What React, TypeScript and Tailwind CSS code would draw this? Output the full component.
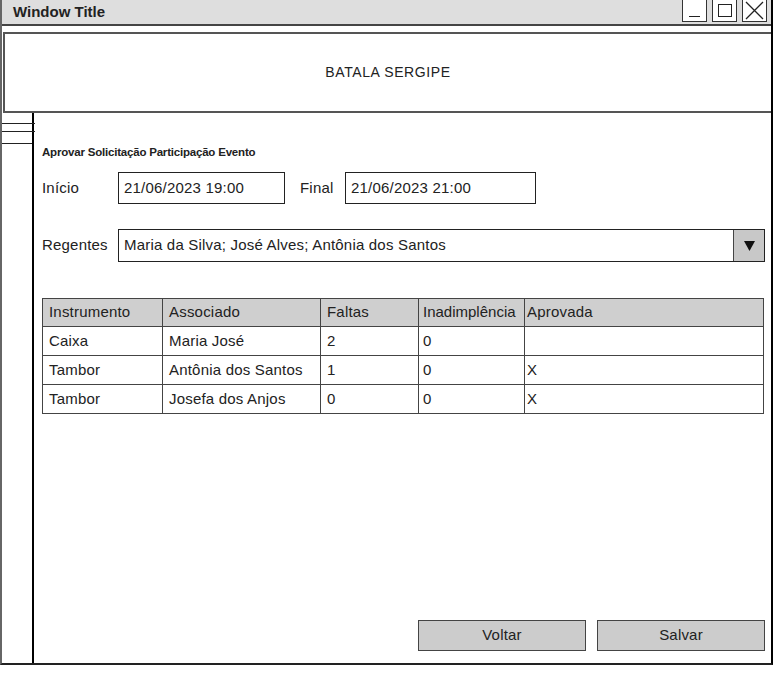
import React from "react";

const font = { fontFamily: '"Liberation Sans", "Noto Sans", sans-serif' };

type Row = {
  instrumento: string;
  associado: string;
  faltas: string;
  inadimplencia: string;
  aprovada: string;
};

const rows: Row[] = [
  { instrumento: "Caixa", associado: "Maria José", faltas: "2", inadimplencia: "0", aprovada: "" },
  { instrumento: "Tambor", associado: "Antônia dos Santos", faltas: "1", inadimplencia: "0", aprovada: "X" },
  { instrumento: "Tambor", associado: "Josefa dos Anjos", faltas: "0", inadimplencia: "0", aprovada: "X" },
];

/**
 * Window control boxes in the title bar (minimise, maximise, close)
 */
const WindowButtons: React.FC = () => (
  <div className="flex items-start gap-[5px] self-start pr-[4px]">
    <div className="w-[25px] h-[22px] bg-white border border-[#333] border-t-0 flex items-end justify-center pb-[4px]">
      <div className="w-[11px] h-[1.5px] bg-[#222]" />
    </div>
    <div className="w-[25px] h-[22px] bg-white border border-[#333] border-t-0 flex items-center justify-center">
      <div className="w-[14px] h-[13px] border-[1.5px] border-[#222]" />
    </div>
    <div className="w-[25px] h-[22px] bg-white border border-[#333] border-t-0 flex items-center justify-center">
      <svg width="19" height="19" viewBox="0 0 19 19">
        <path d="M1 1 L18 18 M18 1 L1 18" stroke="#222" strokeWidth="1.3" fill="none" />
      </svg>
    </div>
  </div>
);

const TextBox: React.FC<{ value: string; className: string }> = ({ value, className }) => (
  <div className={`h-[32px] border-[1.5px] border-[#222] bg-white flex items-center pl-[5px] text-[#222] ${className}`}>
    {value}
  </div>
);

const cell = "border border-[#444] px-[6px] text-left font-normal";

export default function App() {
  return (
    <div className="w-[778px] h-[683px] bg-white text-[#222]" style={font}>
      <div className="w-[773px] h-[665px] border-l-2 border-l-[#666] border-r-2 border-r-black border-b-2 border-b-[#222] flex flex-col">
        {/* Title bar */}
        <div className="h-[26px] shrink-0 bg-[#dedede] border-b-2 border-[#444] flex items-center justify-between">
          <span className="pl-[11px] text-[15px] font-bold">Window Title</span>
          <WindowButtons />
        </div>

        {/* Header */}
        <div className="h-[81px] shrink-0 mt-[6px] ml-[1px] border-2 border-[#555] border-r-0 flex items-center justify-center text-[14px] tracking-[0.6px]">
          BATALA SERGIPE
        </div>

        <div className="flex flex-1 min-h-0">
          {/* Left rail */}
          <div className="w-[32px] shrink-0 border-r-2 border-black flex flex-col">
            <div className="h-[10px]" />
            <div className="w-[33px] border-t-[1.5px] border-[#222]" />
            <div className="h-[7px]" />
            <div className="w-[33px] border-t-[1.5px] border-[#222]" />
            <div className="h-[11px]" />
            <div className="w-full border-t-[1.5px] border-[#222]" />
          </div>

          {/* Content */}
          <div className="flex-1 flex flex-col pl-[8px] pr-[6px] pb-[12px] text-[15px] tracking-[0.2px]">
            <div className="mt-[32px] h-[14px] leading-[14px] text-[11.5px] font-bold tracking-[-0.2px]">
              Aprovar Solicitação Participação Evento
            </div>

            <div className="mt-[13px] flex items-center">
              <span className="w-[76px]">Início</span>
              <TextBox value="21/06/2023 19:00" className="w-[167px]" />
              <span className="ml-[15px] w-[45px]">Final</span>
              <TextBox value="21/06/2023 21:00" className="w-[191px]" />
            </div>

            <div className="mt-[25px] flex items-center">
              <span className="w-[76px]">Regentes</span>
              <div className="flex-1 h-[33px] border-[1.5px] border-[#222] flex">
                <div className="flex-1 flex items-center pl-[5px]">
                  Maria da Silva; José Alves; Antônia dos Santos
                </div>
                <div className="w-[31px] bg-[#c8c8c8] border-l border-[#444] flex items-center justify-center">
                  <svg width="11" height="10" viewBox="0 0 11 10">
                    <path d="M0 0 L11 0 L5.5 10 Z" fill="#111" />
                  </svg>
                </div>
              </div>
            </div>

            <table className="mt-[36px] w-[722px] border-collapse border-[1.5px] border-[#333]">
              <thead>
                <tr className="h-[28px] bg-[#cfcfcf]">
                  <th className={`${cell} w-[120px]`}>Instrumento</th>
                  <th className={`${cell} w-[158px]`}>Associado</th>
                  <th className={`${cell} w-[98px]`}>Faltas</th>
                  <th className={`${cell} w-[106px] pl-[4px] pr-[2px] tracking-normal`}>Inadimplência</th>
                  <th className={`${cell} pl-[2px]`}>Aprovada</th>
                </tr>
              </thead>
              <tbody>
                {rows.map((r, i) => (
                  <tr key={i} className="h-[29px]">
                    <td className={cell}>{r.instrumento}</td>
                    <td className={cell}>{r.associado}</td>
                    <td className={cell}>{r.faltas}</td>
                    <td className={`${cell} pl-[4px]`}>{r.inadimplencia}</td>
                    <td className={`${cell} pl-[2px]`}>{r.aprovada}</td>
                  </tr>
                ))}
              </tbody>
            </table>

            <div className="mt-auto flex justify-end gap-[11px]">
              <button className="w-[168px] h-[31px] bg-[#cccccc] border-[1.5px] border-[#444]">Voltar</button>
              <button className="w-[168px] h-[31px] bg-[#cccccc] border-[1.5px] border-[#444]">Salvar</button>
            </div>
          </div>
        </div>
      </div>
    </div>
  );
}
